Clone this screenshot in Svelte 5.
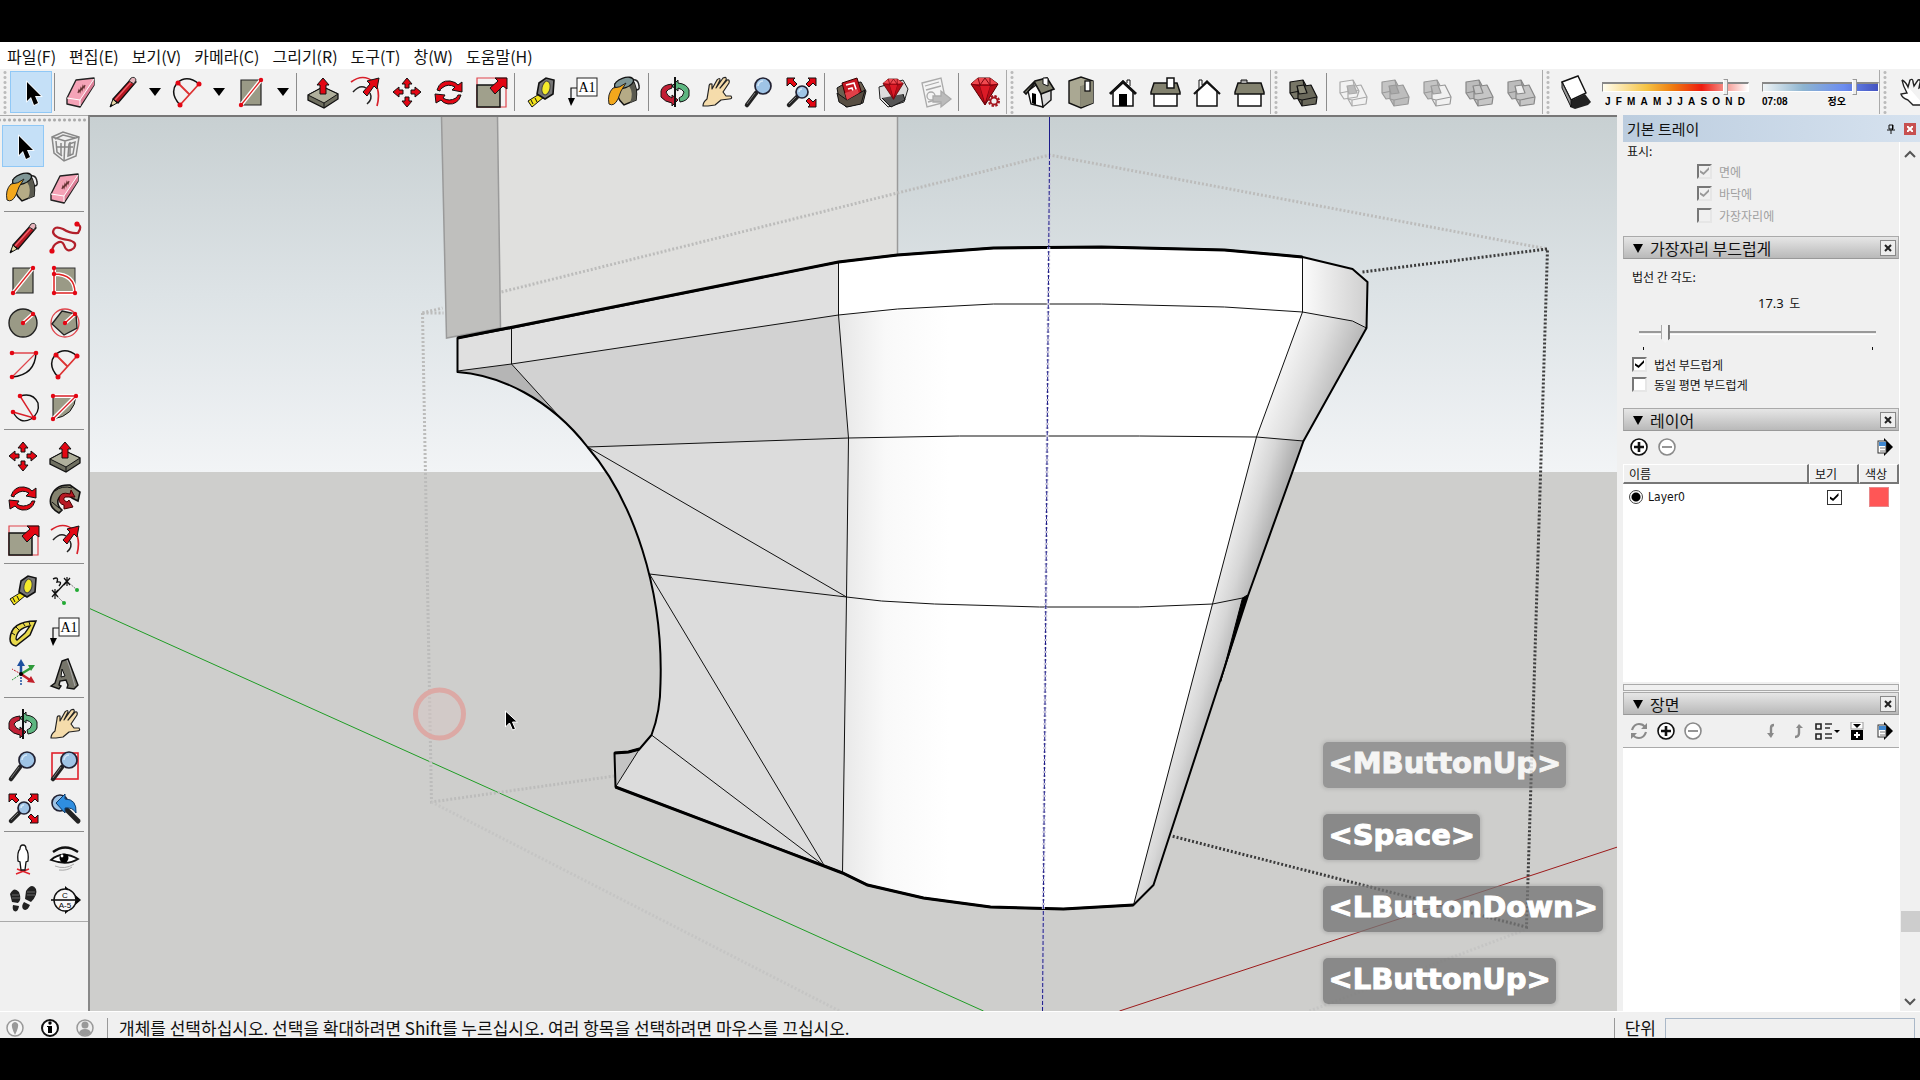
<script lang="ts">
	const uid = $props.id();

	const menus = ['파일(F)', '편집(E)', '보기(V)', '카메라(C)', '그리기(R)', '도구(T)', '창(W)', '도움말(H)'];
	const months = 'JFMAMJJASOND'.split('');
	const keys = [
		{ label: '<MButtonUp>', faded: true },
		{ label: '<Space>', faded: false },
		{ label: '<LButtonDown>', faded: false },
		{ label: '<LButtonUp>', faded: false }
	];

	// "name+" means the button has a drop-down caret next to it
	const mainBar = [
		['select'],
		['eraser', 'pencil+', 'arc+', 'rect+'],
		['pushpull', 'offset', 'move', 'rotate', 'scale'],
		['tape', 'label', 'paint'],
		['orbit', 'pan', 'zoom', 'extents'],
		['warehouse', 'extwarehouse', 'layout'],
		['ruby']
	];
	const viewBar = ['iso', 'top', 'front', 'right', 'back', 'left'];
	const solidBar = ['intersect', 'union', 'subtract', 'trim', 'split'];
	const sideBar = [
		['select', 'component', 'paint', 'eraser'],
		['pencil', 'freehand', 'rect', 'rotrect', 'circle', 'polygon', 'arc3', 'arc', 'arccenter', 'pie'],
		['move', 'pushpull', 'rotate', 'followme', 'scale', 'offset'],
		['tape', 'dimension', 'protractor', 'label', 'axes', 'text3d'],
		['orbit', 'pan', 'zoom', 'zoomwin', 'extents', 'previous'],
		['person', 'eye', 'walk', 'section']
	];

	const lens = (x: number, y: number, r: number) =>
		`<path d="M${x - r + 1} ${y + r - 1}L6 31" stroke="#222" stroke-width="4.5" stroke-linecap="round"/><path d="M${x - r} ${y + r - 1}L6 30" stroke="#777" stroke-width="1"/><circle cx="${x}" cy="${y}" r="${r}" fill="#9fc4e6" stroke="#223" stroke-width="1.7"/><path d="M${x - r + 3} ${y}a${r - 3} ${r - 3} 0 0 1 ${r - 3} ${3 - r}" fill="none" stroke="#d5e8f8" stroke-width="1.5"/>`;
	const red = 'fill="#e30613" stroke="#111" stroke-width="1" stroke-linejoin="round"';
	const dots = (list: number[][], r = 2.2) =>
		list.map(([x, y]) => `<circle cx="${x}" cy="${y}" r="${r}" fill="#e30613"/>`).join('');
	const slant = '<path d="M16 18L23 10L20 7L32 4L30 15L27 12L20 22Z" ' + red + '/>';
	const rubyGem =
		'<path d="M4 10L11 4H23L31 10L18 31Z" fill="#b80d18" stroke="#500" /><path d="M4 10H31L23 4H11Z" fill="#ef4a50"/><path d="M11 4L13 11L18 31L23 11V4M13 11L18 4L23 11M4 10L13 12L23 12L31 10" fill="none" stroke="#7c0610" stroke-width="1"/><path d="M13 12H23L18 28Z" fill="#dc1a26"/>';
	const boxes = (a: string, b: string, s: string, mid = 'none') =>
		`<g stroke="${s}" stroke-width="1.2" stroke-linejoin="round"><path d="M5 8L18 6L24 17L22 23L9 25L5 19Z" fill="${a}"/><path d="M5 19L20 16L24 17M20 16L18 6" fill="none"/><path d="M13 13L26 11L32 23L31 30L17 32L13 25Z" fill="${b}"/><path d="M17 26L32 23M13 25L17 26L17 32" fill="none"/><path d="M12 12L19 11L22 19L14 20Z" fill="${mid}"/></g>`;

	const icons: Record<string, string> = {
		select: '<path d="M14 8V27L18 23L21 31L25 29L22 22H28Z" fill="#000" stroke="#fff" stroke-width="1.5" paint-order="stroke"/>',
		eraser:
			'<path d="M4 24L13 6L31 4V11L17 33L4 30Z" fill="#f5a3b7" stroke="#222" stroke-width="1.4" stroke-linejoin="round"/><path d="M17 26L31 5V11L17 32Z" fill="#dc7f97"/><path d="M4 24L17 26L31 5M17 26V32" fill="none" stroke="#fff" stroke-width="1"/><path d="M15 19l1-3 1 2 1-4 1 2 1-4 1 2 1-3" fill="none" stroke="#633" stroke-width="1.2"/>',
		pencil:
			'<path d="M5 33L8 25L12 29Z" fill="#e6d9a8" stroke="#111"/><path d="M5 33L6 30L8 31Z"/><path d="M8 25L26 5L31 8L13 29Z" fill="#b51620" stroke="#111" stroke-width="1.3"/><path d="M10 26L27 7" stroke="#f0606a" stroke-width="1.4"/><path d="M24 7L26 4Q30 2 31 6L29 10Z" fill="#e7b5bd" stroke="#333"/>',
		arc:
			'<path d="M11 31Q0 19 8 9Q18 0 30 10" fill="none" stroke="#111" stroke-width="1.5"/><path d="M11 31L30 10M9 9L20 20" stroke="#d33" stroke-width="1.8"/>' +
			dots([[11, 31], [30, 10], [9, 9]], 2.5),
		rect:
			'<path d="M8 6H28V31H8Z" fill="#9a9a86" stroke="#222" stroke-width="1.2"/><path d="M8 31L28 6" stroke="#fff" stroke-width="4"/><path d="M8 31L28 6" stroke="#d22" stroke-width="1.3"/>' +
			dots([[8, 31], [28, 6]]),
		pushpull:
			'<path d="M3 21L18 13L33 20V25L19 34L3 26Z" fill="#6f6f60" stroke="#111" stroke-width="1.3"/><path d="M3 21L18 13L33 20L19 29Z" fill="#b0b09c" stroke="#111"/><path d="M19 29V34" stroke="#111"/><path d="M15 20V11H12L18 4L24 11H21V20Z" ' + red + '/>',
		offset:
			'<path d="M4 8Q16 -1 27 8Q34 17 30 32" fill="none" stroke="#d8202a" stroke-width="1.7"/><path d="M6 18Q13 10 19 14M23 19Q26 25 20 30" fill="none" stroke="#222" stroke-width="1.5"/>' + slant,
		move:
			'<path d="M18 4L23 10H20V14H16V10H13ZM18 33L13 27H16V23H20V27H23ZM4 18L10 13V16H14V20H10V23ZM32 18L26 23V20H22V16H26V13Z" ' + red + '/>',
		rotate:
			'<path d="M6 16Q9 6 19 7Q25 8 27 11L31 8V18L21 16L24 13Q17 9 11 14Q9 15 9 17Z" ' + red + '/><path d="M30 21Q27 31 17 30Q12 29 10 26L5 29L4 20L14 21L12 24Q18 28 25 24Q26 23 27 21Z" ' + red + '/>',
		scale:
			'<path d="M4 4H33V33H4Z" fill="none" stroke="#e0454c" stroke-width="1.2"/><path d="M4 11H27V33H4Z" fill="#a0a08c" stroke="#111" stroke-width="1.5"/><path d="M17 14L25 7L22 4H34V15L30 12L22 20Z" ' + red + '/>',
		tape:
			'<path d="M5 27L18 19L21 23L9 33Z" fill="#f2e21b" stroke="#111"/><path d="M8 26l2 4M12 24l2 4" stroke="#111"/><path d="M16 9L23 4L31 6L30 20L22 25L14 20Z" fill="#777" stroke="#111" stroke-width="1.6"/><ellipse cx="23" cy="14" rx="4" ry="7" transform="rotate(12 23 14)" fill="#f4ea2a" stroke="#444"/>',
		label:
			'<path d="M6 24V14H14" fill="none" stroke="#111" stroke-width="1.2"/><path d="M3 24H10L6 32Z"/><rect x="12" y="4" width="20" height="18" fill="#fff" stroke="#222"/><text x="22" y="18" font-size="14" text-anchor="middle" font-family="Liberation Serif">A1</text>',
		paint:
			'<path d="M20 8Q31 2 32 12Q33 16 29 16" fill="none" stroke="#222" stroke-width="1.5"/><path d="M8 10L25 5Q31 14 29 26L17 31Q8 23 8 10Z" fill="#b5ab86" stroke="#111" stroke-width="1.5"/><path d="M22 12Q27 19 23 29L29 26Q31 14 25 5Z" fill="#59594f"/><ellipse cx="17" cy="9" rx="10" ry="5" transform="rotate(-20 17 9)" fill="#7f9696" stroke="#111" stroke-width="1.3"/><path d="M6 14Q13 14 19 9Q13 17 11 25Q7 33 2 30Q0 20 6 14Z" fill="#f3a81c" stroke="#222"/>',
		orbit:
			'<path d="M15 10Q5 11 4 17V23Q8 28 15 29V32L21 26L15 21V24Q10 22 9 18Q11 15 15 14Z" fill="#c21f35" stroke="#111"/><path d="M21 9Q30 10 32 16V22Q30 27 23 28L22 24Q26 23 27 18Q25 15 21 14V17L15 12L21 6Z" fill="#5db680" stroke="#111"/><path d="M18 3V33" stroke="#111" stroke-width="2"/>',
		pan:
			'<path d="M4 32Q4 28 8 25L10 13Q10 9 13 10L13 15L18 6Q21 3 21 6L17 14L24 4Q28 2 27 6L21 14L28 6Q31 5 30 9L24 18L27 22H32Q34 25 30 25L22 26L16 31L9 32Z" fill="#f5dcab" stroke="#222" stroke-width="1.2" stroke-linejoin="round"/>',
		zoom: lens(22, 12, 8),
		extents:
			lens(19, 18, 6) +
			'<path d="M4 4H12L10 6L14 10L11 13L7 9L4 12ZM33 4H25L27 6L23 10L26 13L30 9L33 12ZM33 33H25L27 31L23 27L26 24L30 28L33 25Z" ' + red + '/>',
		warehouse:
			'<path d="M4 14L9 11L28 8L33 17L30 29L13 33L6 25Z" fill="#6b6152" stroke="#111"/><path d="M9 9L24 4L29 20L14 27Z" fill="#c81722" stroke="#300"/><path d="M13 11L21 9L24 18M15 15L19 14L21 20" fill="none" stroke="#fff" stroke-width="1.6"/><path d="M4 19L14 26L32 16L28 30L14 33L6 28Z" fill="#574e42" stroke="#111"/><path d="M14 26L26 19L24 15L12 19Z" fill="#e04048"/>',
		extwarehouse:
			'<path d="M4 13L28 6L33 15L29 28L13 33L5 25Z" fill="#ddd" stroke="#222"/><path d="M7 24L16 33L30 26L28 20" fill="#555" stroke="#111"/><g transform="translate(5 2) scale(.75)">' + rubyGem + '</g>',
		layout:
			'<g stroke="#aaa" stroke-width="1.3"><path d="M5 9L24 4L29 28L10 33Z" fill="#f4f4f4"/><path d="M8 12L22 8M9 16L24 12M11 28L26 24" fill="none"/><circle cx="14" cy="22" r="4" fill="none"/><path d="M16 22H24V17L34 25L24 33V28H16Z" fill="#bbb"/></g>',
		ruby:
			rubyGem + '<circle cx="27" cy="27" r="5" fill="#f0f0f0" stroke="#a3141d" stroke-width="2" stroke-dasharray="2.4 1.5"/><circle cx="27" cy="27" r="3.5" fill="none" stroke="#a3141d" stroke-width="1.8"/>',
		iso:
			'<path d="M7 17L15 11L22 19V33L10 30Z" fill="#fff" stroke="#111" stroke-width="1.4"/><path d="M20 20L30 14V26L22 33Z" fill="#ddd" stroke="#111" stroke-width="1.4"/><path d="M3 18L14 7L26 4L33 15L20 20L14 9L5 20Z" fill="#83826f" stroke="#111" stroke-width="1.6"/><path d="M22 4H27V12L22 10Z" fill="#fff" stroke="#111"/><path d="M11 19L15 20V31L11 29Z"/>',
		top:
			'<path d="M6 7L18 3L30 7V29L18 34L6 29Z" fill="#aaa893" stroke="#111" stroke-width="1.4"/><path d="M18 12V33" stroke="#5d5c4e"/><path d="M18 12L30 7V29L18 33Z" fill="#8c8b77"/><rect x="22" y="7" width="5" height="10" fill="#fff" stroke="#111" stroke-width="1.3"/>',
		front:
			'<path d="M8 17V32H28V17L18 7Z" fill="#fff" stroke="#111" stroke-width="1.5"/><path d="M5 20L18 8L31 20" fill="none" stroke="#111" stroke-width="3"/><rect x="14" y="20" width="8" height="12"/><path d="M25 12V6H22V9" fill="#fff" stroke="#111"/>',
		right:
			'<rect x="7" y="18" width="23" height="14" fill="#fff" stroke="#111" stroke-width="1.5"/><path d="M7 9H30L33 18V20H4V18Z" fill="#83826f" stroke="#111" stroke-width="1.5"/><rect x="20" y="4" width="7" height="10" fill="#fff" stroke="#111" stroke-width="1.5"/>',
		back:
			'<path d="M8 17V32H28V17L18 7Z" fill="#fff" stroke="#111" stroke-width="1.5"/><path d="M5 20L18 8L31 20" fill="none" stroke="#111" stroke-width="2.2"/><path d="M10 14V6H13V11" fill="#fff" stroke="#111"/>',
		left:
			'<rect x="7" y="18" width="23" height="14" fill="#fff" stroke="#111" stroke-width="1.5"/><path d="M7 9H30L33 18V20H4V18Z" fill="#83826f" stroke="#111" stroke-width="1.5"/><path d="M10 9V6H16V9" fill="#aaa" stroke="#111"/>',
		outer: boxes('#777667', '#6a695b', '#111', '#8b8a78'),
		intersect: boxes('none', 'none', '#aaa', '#bbb'),
		union: boxes('#c4c4c4', '#bdbdbd', '#999', '#aaa'),
		subtract: boxes('#c4c4c4', '#f1f1f1', '#999', '#bbb'),
		trim: boxes('#bcbcbc', '#c6c6c6', '#888', '#c6c6c6'),
		split: boxes('#bcbcbc', '#c6c6c6', '#888', '#eee'),
		shadow:
			'<path d="M13 27L28 20L34 28L31 31L18 35L13 33Z" fill="#222"/><path d="M5 8L21 2L29 19L14 26Z" fill="#fff" stroke="#111" stroke-width="1.4"/><path d="M5 8L14 26V33L5 14Z" fill="#999" stroke="#111"/>',
		component:
			'<g fill="none" stroke="#888" stroke-width="1.5"><path d="M5 9L16 4L32 9L29 28L17 33L7 25Z" fill="#eee"/><path d="M5 9L18 13L32 9M18 13L17 33M9 13L10 24L15 28M22 16L28 14L26 26L21 28Z"/><path d="M8 11L16 7L28 10M10 19L26 19M14 15v12M23 14v14"/></g>',
		freehand:
			'<path d="M5 31Q6 25 10 23Q15 20 17 25Q20 34 27 28Q31 22 21 20Q7 18 6 12Q7 5 16 9Q24 14 31 13Q36 6 30 4" fill="none" stroke="#b21f2a" stroke-width="2.2"/>' +
			dots([[5, 31], [30, 4]], 2.6),
		rotrect:
			'<rect x="8" y="6" width="20" height="25" fill="#9a9a86" stroke="#333"/><path d="M7 12Q28 12 28 31M7 6V31H28" fill="none" stroke="#fff" stroke-width="4"/><path d="M7 12Q28 12 28 31M7 6V31H28" fill="none" stroke="#d22" stroke-width="1.5"/>' +
			dots([[7, 6], [7, 12], [7, 31], [28, 31]]),
		circle:
			'<circle cx="18" cy="19" r="14" fill="#9a9a86" stroke="#222" stroke-width="1.4"/><path d="M18 19L28 10" stroke="#fff" stroke-width="4"/><path d="M18 19L28 10" stroke="#d22" stroke-width="1.5"/>' +
			dots([[18, 19], [28, 10]]),
		polygon:
			'<circle cx="18" cy="19" r="14" fill="none" stroke="#e0454c" stroke-width="1.3"/><path d="M15 7L29 10L30 24L17 31L5 20Z" fill="#9a9a86" stroke="#222" stroke-width="1.4"/><path d="M18 19L28 10" stroke="#fff" stroke-width="4"/><path d="M18 19L28 10" stroke="#d22" stroke-width="1.5"/>' +
			dots([[18, 19], [28, 10]]),
		arc3:
			'<path d="M31 7Q30 29 7 31" fill="none" stroke="#111" stroke-width="1.5"/><path d="M7 7H31L7 31" fill="none" stroke="#e0454c" stroke-width="1.3"/>' +
			dots([[7, 7], [31, 7], [7, 31]], 2.3),
		arccenter:
			'<path d="M15 8Q28 4 33 15Q35 25 26 31Q15 37 8 24" fill="none" stroke="#111" stroke-width="1.4"/><path d="M15 8L29 30L8 24" fill="none" stroke="#d8202a" stroke-width="1.4"/>' +
			dots([[15, 8], [29, 30], [8, 24]], 2.3),
		pie:
			'<path d="M6 7H29Q28 28 6 31Z" fill="#9a9a86" stroke="#111"/><path d="M6 8H29L6 31" fill="none" stroke="#fff" stroke-width="4"/><path d="M6 8H29L6 31" fill="none" stroke="#d8202a" stroke-width="1.4"/>' +
			dots([[6, 8], [29, 8], [6, 31]]),
		followme:
			'<path d="M12 33Q1 27 4 17Q8 4 23 5L33 12L31 21L25 18Q15 10 11 20Q10 26 15 30Z" fill="#85836f" stroke="#111" stroke-width="1.6"/><path d="M23 14Q13 11 12 19Q12 24 17 25L17 29L26 27L22 20L20 22Q15 20 18 17H28L24 10Z" fill="#b81924" stroke="#400"/><path d="M5 22L12 28M8 11Q15 5 25 8" fill="none" stroke="#111"/>',
		dimension:
			'<path d="M8 22L20 9" stroke="#111" stroke-width="1.3"/><path d="M20 9L30 18M8 22L17 31" stroke="#777" stroke-dasharray="2 1"/><path d="M17 6l6 7M17 13l6-7M5 18l6 7M5 25l6-7M20 5v9M8 17v10" stroke="#111" stroke-width="1.2"/><path d="M6 7Q12 4 10 10Q16 9 12 14" fill="none" stroke="#111" stroke-width="1.4"/><circle cx="30" cy="18" r="2" fill="#2a3"/><circle cx="17" cy="31" r="2" fill="#2a3"/>',
		protractor:
			'<path d="M5 25Q6 7 31 7L25 21L11 32Q5 31 5 25Z" fill="#e8d94c" stroke="#111" stroke-width="1.5"/><path d="M11 25Q12 14 25 12L20 19L12 26Z" fill="#f3f3f3" stroke="#111" stroke-width="1.3"/><path d="M7 19l3 2M11 13l3 3M18 9l2 3M24 8l1 3" stroke="#111"/>',
		axes:
			'<path d="M16 18V8" stroke="#1d4fa0" stroke-width="2.5"/><path d="M12 10L16 3L20 10Z" fill="#1d4fa0"/><path d="M16 18L26 12" stroke="#2f9a3b" stroke-width="2.5"/><path d="M23 9L30 9L26 15Z" fill="#2f9a3b"/><path d="M16 18L25 24" stroke="#c21f2a" stroke-width="2.5"/><path d="M26 20L30 27L22 26Z" fill="#c21f2a"/><path d="M16 18L7 13" stroke="#c21f2a" stroke-dasharray="2 1"/><path d="M16 18L7 24" stroke="#2f9a3b" stroke-dasharray="2 1"/><path d="M16 18V29" stroke="#1d4fa0" stroke-width="1.5" stroke-dasharray="2 1"/><circle cx="16" cy="18" r="2"/>',
		text3d:
			'<path d="M15 5L21 3L31 29L27 33L20 32L21 29L19 24L13 25L12 29L14 30L12 33L4 30L8 27Z" fill="#76756a" stroke="#111" stroke-width="1.4"/><path d="M15 13L18 20L14 21Z" fill="#f0f0f0" stroke="#111"/><path d="M20 4L23 12L28 30" fill="none" stroke="#aaa" stroke-width="1"/>',
		zoomwin: '<rect x="5" y="5" width="26" height="26" fill="none" stroke="#e0222c" stroke-width="1.6"/>' + lens(22, 12, 8),
		previous:
			'<circle cx="13" cy="13" r="8" fill="#9fc4e6" stroke="#223" stroke-width="1.6"/><path d="M20 20L31 31" stroke="#222" stroke-width="5" stroke-linecap="round"/><path d="M9 13L18 4V9Q30 9 29 23Q26 17 18 18V23Z" fill="#2f8ee0" stroke="#0c3b6b"/>',
		person:
			'<path d="M12 29L25 34M24 29L11 34" stroke="#e0222c" stroke-width="1.4"/><path d="M18 5Q21 5 21 9Q24 12 23 21L21 22L20 30H16L15 22L13 21Q12 12 15 9Q15 5 18 5Z" fill="#fff" stroke="#111" stroke-width="1.3"/>',
		eye:
			'<path d="M6 12Q18 3 31 12" fill="none" stroke="#111" stroke-width="2.4"/><path d="M4 20Q15 10 31 19Q20 26 4 20Z" fill="#fff" stroke="#111" stroke-width="1.8"/><circle cx="17" cy="18" r="4.5"/><circle cx="15" cy="16" r="1.4" fill="#fff"/><path d="M8 26Q18 30 27 24M12 30Q20 31 25 27" fill="none" stroke="#aaa"/>',
		walk:
			'<path d="M5 12Q9 4 14 10Q17 18 13 21L7 20ZM8 23L14 24Q13 31 9 29Q7 27 8 23ZM21 9Q27 0 31 7Q33 13 26 20L20 17ZM19 20L25 23Q22 30 18 27Q16 24 19 20Z" fill="#222"/><path d="M7 13h7M7 16h8M22 10h8M22 13h8" stroke="#666"/>',
		section:
			'<path d="M18 4L34 18L18 32Z"/><circle cx="18" cy="18" r="11" fill="#f8f8f8" stroke="#111" stroke-width="1.4"/><path d="M4 18H33" stroke="#111" stroke-width="1.6"/><text x="18" y="16" font-size="8" text-anchor="middle" font-family="Liberation Sans">C</text><text x="18" y="26" font-size="8" text-anchor="middle" font-family="Liberation Sans">A-5</text>',
		hand:
			'<path d="M8 6Q12 8 14 13L16 6Q19 4 19 8L20 12L24 6Q27 5 26 9L25 14L31 11M8 6Q9 12 13 19L7 20Q8 24 14 26L19 31H30" fill="#fff" stroke="#222" stroke-width="1.4"/>'
	};
</script>

{#snippet tool(name: string, active = false)}
	<button class="tool" class:active aria-label={name}>
		<svg viewBox="0 0 36 36">{@html icons[name]}</svg>
	</button>
{/snippet}

{#snippet panelHead(title: string)}
	<div class="panel-head">
		<svg width="10" height="10"><path d="M0 1H10L5 10Z" /></svg>
		<h2>{title}</h2>
		<button class="close" aria-label="close {title}">
			<svg width="8" height="8"><path d="M1 1L7 7M7 1L1 7" stroke="#222" stroke-width="2" /></svg>
		</button>
	</div>
{/snippet}

{#snippet round(sign: string, muted = false)}
	<button class="mini" class:muted aria-label={sign}>
		<svg viewBox="0 0 18 18">
			<circle cx="9" cy="9" r="8" fill="#fff" stroke="currentColor" stroke-width="1.6" />
			<path d={sign === 'add' ? 'M4 9H14M9 4V14' : 'M4 9H14'} stroke="currentColor" stroke-width={muted ? 1.8 : 2.6} />
		</svg>
	</button>
{/snippet}

{#snippet details()}
	<button class="mini" aria-label="details">
		<svg viewBox="0 0 18 18">
			<path d="M8 0L17 9L8 18Z" />
			<rect x="2" y="3" width="8" height="12" fill="#fff" stroke="#333" />
			<rect x="3" y="4" width="7" height="4" fill="#3f87cf" />
			<path d="M4 10H9M4 13H9" stroke="#777" />
		</svg>
	</button>
{/snippet}

<div class="shell">
	<header>
		<nav>
			{#each menus as menu}
				<button>{menu}</button>
			{/each}
		</nav>
		<div class="toolbar">
			<i class="grip"></i>
			{#each mainBar as group, g}
				{#if g > 0}<i class="sep"></i>{/if}
				{#each group as name}
					{@render tool(name.replace('+', ''), name === 'select')}
					{#if name.endsWith('+')}
						<button class="caret" aria-label="more">
							<svg width="12" height="8"><path d="M0 0H12L6 8Z" /></svg>
						</button>
					{/if}
				{/each}
			{/each}
			<i class="edge"></i>
			{#each viewBar as name}{@render tool(name)}{/each}
			<i class="edge"></i>
			{@render tool('outer')}
			<i class="sep"></i>
			{#each solidBar as name}{@render tool(name)}{/each}
			<i class="edge"></i>
			{@render tool('shadow')}
			<div class="shade date">
				<input type="range" min="0" max="100" value="86" aria-label="date" />
				<div class="scale-row">
					{#each months as month}<span>{month}</span>{/each}
				</div>
			</div>
			<div class="shade time">
				<input type="range" min="0" max="100" value="81" aria-label="time" />
				<div class="scale-row"><span>07:08</span><span>정오</span></div>
			</div>
			<i class="edge"></i>
			{@render tool('hand')}
		</div>
	</header>

	<main>
		<aside class="side">
			<i class="side-grip"></i>
			{#each sideBar as group}
				<div class="tools">
					{#each group as name}{@render tool(name, name === 'select')}{/each}
				</div>
			{/each}
		</aside>

		<section class="viewport">
			<svg viewBox="90 117 1528 894" preserveAspectRatio="xMidYMid slice">
				<defs>
					<linearGradient id="{uid}-sky" x1="0" y1="0" x2="0" y2="1">
						<stop offset="0" stop-color="#c8d0d2" />
						<stop offset="0.5" stop-color="#dde3e6" />
						<stop offset="1" stop-color="#f2f4f6" />
					</linearGradient>
					<linearGradient id="{uid}-front" gradientUnits="userSpaceOnUse" x1="843" y1="0" x2="950" y2="0">
						<stop offset="0" stop-color="#e8e8e8" />
						<stop offset="0.4" stop-color="#f9f9f9" />
						<stop offset="1" stop-color="#fff" />
					</linearGradient>
					<linearGradient id="{uid}-flank" gradientUnits="userSpaceOnUse" x1="1205" y1="610" x2="1246" y2="622">
						<stop offset="0" stop-color="#efefef" />
						<stop offset="0.5" stop-color="#d6d6d6" />
						<stop offset="1" stop-color="#b0b0b0" />
					</linearGradient>
					<linearGradient id="{uid}-shoulder" gradientUnits="userSpaceOnUse" x1="1276" y1="375" x2="1336" y2="398">
						<stop offset="0" stop-color="#f6f6f6" />
						<stop offset="0.5" stop-color="#dedede" />
						<stop offset="1" stop-color="#bababa" />
					</linearGradient>
					<linearGradient id="{uid}-rim" x1="0" y1="0" x2="1" y2="0">
						<stop offset="0" stop-color="#fbfbfb" />
						<stop offset="1" stop-color="#cfcfcf" />
					</linearGradient>
				</defs>

				<rect x="90" y="117" width="1528" height="356" fill="url(#{uid}-sky)" />
				<rect x="90" y="472" width="1528" height="540" fill="#cececc" />

				<!-- axes on the ground -->
				<path d="M89 608L984 1011" stroke="#1f9d24" fill="none" />
				<path d="M1120 1011L1618 847" stroke="#9c1a1a" fill="none" />

				<!-- wall panel behind the bowl -->
				<path d="M498 117H898V300L500 345Z" fill="#e0e0de" />
				<path d="M442 117H498L501 328L447 338Z" fill="#bfbfbd" />
				<path d="M442 117L447 338L501 328L498 117M898 117V255" stroke="#9a9a9a" stroke-width="1.5" fill="none" />

				<!-- hidden selection box edges -->
				<g class="dots" stroke="#bcbcbb">
					<path d="M423 313L443 308M502 292L1050 155L1548 249" />
					<path d="M423 313H444M423 313L432 802L615 776" />
					<path d="M432 802L840 1011M1525 930L1310 1011" stroke="#c5c5c4" />
				</g>

				<!-- bowl faces -->
				<path
					d="M458 338L512 328L839 262L849 438L847 597L843 873L825 866L616 787L615 753L629 752L640 749L652 735C657 722 661 705 661 683C664 590 634 500 588 447C550 398 500 375 458 372Z"
					fill="#dcdcdc"
				/>
				<path d="M458 338L512 328L839 262V315L512 364L458 371Z" fill="#e0e0e0" />
				<path d="M512 364L839 315L849 438L588 447L563 420Z" fill="#d2d2d2" />
				<path d="M458 371L512 364L563 420L535 399L512 386L489 377L474 373Z" fill="#b5b5b5" />
				<path d="M615 753L629 752L640 749L616 787Z" fill="#c4c4c4" />
				<path
					d="M839 262L898 255L994 248L1102 247L1225 250L1303 257V312L1257 437L1213 604L1134 905L1064 909L991 907L924 898L868 885L843 873L847 597L849 438L839 315Z"
					fill="url(#{uid}-front)"
				/>
				<path d="M839 262L898 255L994 248L1102 247L1225 250L1303 257V312L1102 304L994 304L839 315Z" fill="#fff" />
				<path d="M1303 312L1353 321L1367 328L1304 441L1257 437Z" fill="url(#{uid}-shoulder)" />
				<path d="M1257 437L1304 441L1248 597L1154 885L1134 905L1213 604Z" fill="url(#{uid}-flank)" />
				<path d="M1303 257L1353 269L1368 282L1367 328L1353 321L1303 312Z" fill="url(#{uid}-rim)" />

				<!-- thin edges -->
				<g fill="none" stroke="#111" stroke-width="1">
					<path d="M458 371L512 364L839 315L898 309L994 304L1102 304L1225 307L1303 312L1353 321L1367 328" />
					<path d="M512 328V364L563 420" />
					<path d="M839 262V315L849 438L847 597L843 873" />
					<path d="M588 447L849 438L960 436L1140 436L1257 437L1304 441" />
					<path d="M650 574L847 597L882 601L935 604L1040 607H1140L1213 604L1248 597" />
					<path d="M1303 257V312L1257 437L1213 604L1134 905" />
					<path d="M588 447L847 597M650 574L825 866L652 735M640 749L616 787" />
				</g>
				<!-- profile -->
				<path
					d="M458 338L512 328L839 262L898 255L994 248L1102 247L1225 250L1303 257L1353 269L1368 282L1367 328L1304 441L1248 597L1154 885L1134 905L1064 909L991 907L924 898L868 885L843 873L825 866L616 787L615 753L629 752L640 749L652 735C657 722 661 705 661 683C664 590 634 500 588 447C550 398 500 375 458 372Z"
					fill="none"
					stroke="#000"
					stroke-width="2"
					stroke-linejoin="round"
				/>
				<path
					d="M458 338L839 262L898 255L994 248L1102 247L1225 250L1303 257M616 787L843 873L868 885L924 898L991 907L1064 909L1134 905M615 753L629 752L640 749"
					fill="none"
					stroke="#000"
					stroke-width="3"
				/>
				<path d="M1248 595L1243 598L1221 682Z" stroke="#000" />

				<!-- near selection box edges -->
				<path class="dots" d="M1363 272L1548 249L1527 927L1172 836" stroke="#3c3c3c" />
				<path d="M1050 117V155" stroke="#1b1b8a" />
				<path d="M1050 155L1043 1011" stroke="#c9c5da" stroke-width="3" stroke-dasharray="2 2" />
				<path d="M1050 155L1043 1011" stroke="#1b1b8a" stroke-dasharray="4 2" />

				<circle cx="440" cy="714" r="24" fill="#d6c6c4" fill-opacity="0.5" stroke="#dca9a5" stroke-width="5" />
				<path d="M506 711V727L510 723L513 730L516 729L513 722H518Z" stroke="#fff" stroke-width="1" />
			</svg>
			<ul class="keys">
				{#each keys as key}
					<li class:faded={key.faded}>{key.label}</li>
				{/each}
			</ul>
		</section>

		<aside class="tray">
			<div class="tray-title">
				<h1>기본 트레이</h1>
				<button class="pin" aria-label="pin">
					<svg width="8" height="10">
						<path d="M2 1H6V5H2ZM0 6H8M4 6V10" fill="none" stroke="#111" />
						<path d="M5 1h1v5h-1z" />
					</svg>
				</button>
				<button class="shut" aria-label="close tray">
					<svg width="6" height="6"><path d="M0 0L6 6M6 0L0 6" stroke="#fff" stroke-width="2" /></svg>
				</button>
			</div>
			<div class="tray-body">
				<div class="panels">
					<div class="display">
						<p>표시:</p>
						<label><input type="checkbox" checked disabled />면에</label>
						<label><input type="checkbox" checked disabled />바닥에</label>
						<label><input type="checkbox" disabled />가장자리에</label>
					</div>

					{@render panelHead('가장자리 부드럽게')}
					<div class="soften">
						<label for="{uid}-angle">법선 간 각도:</label>
						<output>17.3 <small>도</small></output>
						<input id="{uid}-angle" type="range" min="0" max="180" step="0.1" value="17.3" />
						<div class="ticks"><i></i><i></i></div>
						<label><input type="checkbox" checked />법선 부드럽게</label>
						<label><input type="checkbox" />동일 평면 부드럽게</label>
					</div>

					{@render panelHead('레이어')}
					<div class="bar">
						{@render round('add')}
						{@render round('remove', true)}
						<span class="push"></span>
						{@render details()}
					</div>
					<div class="layers">
						<table>
							<thead>
								<tr><th>이름</th><th class="show">보기</th><th class="color">색상</th></tr>
							</thead>
							<tbody>
								<tr>
									<td><label><input type="radio" name="layer" checked />Layer0</label></td>
									<td class="mid"><input class="flat" type="checkbox" checked aria-label="보기" /></td>
									<td class="mid"><i class="swatch"></i></td>
								</tr>
							</tbody>
						</table>
					</div>
					<i class="splitter"></i>

					{@render panelHead('장면')}
					<div class="bar scenes">
						<button class="mini muted" aria-label="refresh">
							<svg viewBox="0 0 18 18">
								<path d="M2 8Q4 2 9 2Q13 2 15 5M16 10Q14 16 9 16Q5 16 3 13" fill="none" stroke="currentColor" stroke-width="2.2" />
								<path d="M17 1V7H11ZM1 17V11H7Z" fill="currentColor" />
							</svg>
						</button>
						{@render round('add')}
						{@render round('remove', true)}
						<span class="push"></span>
						<button class="mini muted" aria-label="move down">
							<svg viewBox="0 0 18 18">
								<path d="M14 3Q11 3 11 6V13" fill="none" stroke="currentColor" stroke-width="2.4" />
								<path d="M7 11H14L11 16Z" fill="currentColor" />
							</svg>
						</button>
						<button class="mini muted" aria-label="move up">
							<svg viewBox="0 0 18 18">
								<path d="M8 15Q12 15 12 11V5" fill="none" stroke="currentColor" stroke-width="2.4" />
								<path d="M9 6H16L12 2Z" fill="currentColor" />
							</svg>
						</button>
						<button class="mini wide" aria-label="view">
							<svg viewBox="0 0 26 18">
								<path d="M2 2H7V7H2ZM2 12H7V17H2Z" fill="none" stroke="#222" stroke-width="1.6" />
								<path d="M11 2H18M11 6H16M11 12H18M11 16H18" stroke="#333" stroke-width="1.6" />
								<path d="M20 8H26L23 11Z" />
							</svg>
						</button>
						<button class="mini" aria-label="scene details">
							<svg viewBox="0 0 18 18">
								<rect x="2" y="0" width="12" height="7" fill="#fff" stroke="#999" />
								<path d="M4 2H12L8 6Z" />
								<rect x="2" y="8" width="12" height="10" />
								<path d="M5 13H11M8 10V16" stroke="#fff" stroke-width="2" />
							</svg>
						</button>
						{@render details()}
					</div>
					<div class="list"></div>
				</div>
				<div class="scroll">
					<svg width="12" height="8"><path d="M1 7L6 2L11 7" fill="none" stroke="#555" stroke-width="2" /></svg>
					<i></i>
					<svg width="12" height="8"><path d="M1 1L6 6L11 1" fill="none" stroke="#555" stroke-width="2" /></svg>
				</div>
			</div>
		</aside>
	</main>

	<footer>
		<svg viewBox="0 0 20 20">
			<circle cx="10" cy="10" r="8" fill="#f6f6f6" stroke="#999" stroke-width="1.5" />
			<path d="M10 17Q6 9 7 6Q10 2 13 6Q14 9 10 17Z" fill="#999" />
		</svg>
		<svg viewBox="0 0 20 20">
			<circle cx="10" cy="10" r="8" fill="#fff" stroke="#111" stroke-width="2" />
			<circle cx="10" cy="5" r="1.7" />
			<path d="M7 8H12V15H8V9H7Z" />
		</svg>
		<svg viewBox="0 0 20 20">
			<circle cx="10" cy="10" r="8" fill="#eee" stroke="#999" stroke-width="1.5" />
			<circle cx="10" cy="7" r="3.5" fill="#999" />
			<path d="M4 15Q5 11 10 11Q15 11 16 15Q10 20 4 15Z" fill="#999" />
		</svg>
		<p>개체를 선택하십시오. 선택을 확대하려면 Shift를 누르십시오. 여러 항목을 선택하려면 마우스를 끄십시오.</p>
		<label for="{uid}-unit">단위</label>
		<input id="{uid}-unit" type="text" />
	</footer>
</div>

<style>
	:global(body) {
		margin: 0;
	}

	.shell {
		display: flex;
		flex-direction: column;
		box-sizing: border-box;
		height: 100vh;
		padding: 42px 0;
		overflow: hidden;
		background: #000;
		color: #111;
		font-family: "Noto Sans CJK KR", sans-serif;
		font-size: 12px;
	}

	.shell :global(*) {
		box-sizing: border-box;
	}

	button {
		padding: 0;
		border: 0;
		background: none;
		color: inherit;
		font: inherit;
	}

	svg {
		display: block;
	}

	h1,
	h2,
	p,
	ul {
		margin: 0;
		padding: 0;
		font-weight: 400;
	}

	input {
		margin: 0;
	}

	header {
		flex: none;
		background: #f2f2f2;
	}

	nav {
		display: flex;
		gap: 13px;
		height: 27px;
		padding: 0 7px;
		background: #fff;
		font-size: 16px;
		line-height: 28px;
	}

	.toolbar {
		display: flex;
		align-items: center;
		height: 46px;
		overflow: hidden;
	}

	.tool {
		display: flex;
		flex: none;
		align-items: center;
		justify-content: center;
		width: 42px;
		height: 42px;
	}

	.tool svg {
		flex: none;
		width: 36px;
		height: 36px;
	}

	.tool.active {
		border: 1px solid #90c8f6;
		background: #c5e0f7;
	}

	.grip,
	.edge {
		flex: none;
		height: 44px;
	}

	.grip {
		width: 10px;
		background: radial-gradient(circle, #bbb 1px, transparent 2px) 3px 0 / 4px 5px repeat-y;
	}

	.edge {
		width: 12px;
		border-left: 1px solid #aaa;
		background: radial-gradient(circle, #bbb 1px, transparent 2px) 3px 0 / 4px 5px repeat-y;
	}

	.sep {
		flex: none;
		width: 8px;
		height: 38px;
		background: linear-gradient(#8c8c8c, #8c8c8c) 2px 0 / 1px 100% no-repeat;
	}

	.caret {
		display: flex;
		flex: none;
		justify-content: center;
		width: 22px;
	}

	.shade {
		flex: none;
		padding-top: 2px;
	}

	.date {
		width: 147px;
		margin: 0 13px 0 6px;
	}

	.time {
		width: 117px;
	}

	.shade input {
		display: block;
		width: 100%;
		height: 18px;
		appearance: none;
		background: none;
	}

	.shade input::-webkit-slider-runnable-track {
		height: 10px;
		border: 1px solid #fff;
		border-top: 2px solid #888;
		border-left: 1px solid #888;
	}

	.date input::-webkit-slider-runnable-track {
		background: linear-gradient(90deg, #fffdf0, #f5c344 30%, #ef7c10 48%, #ee1c10 68%, #f6a09a 86%, #fff 100%);
	}

	.time input::-webkit-slider-runnable-track {
		background: linear-gradient(90deg, #eef3f5, #8db4d0 35%, #6c8df0 70%, #4453c0);
	}

	.shade input::-webkit-slider-thumb {
		width: 5px;
		height: 16px;
		margin-top: -5px;
		appearance: none;
		border: 1px solid #999;
		border-left-color: #fff;
		background: #eee;
	}

	.scale-row {
		display: flex;
		justify-content: space-between;
		padding: 0 4px 0 3px;
		color: #000;
		font-family: "Liberation Sans", "Noto Sans CJK KR", sans-serif;
		font-size: 10px;
		font-weight: 700;
		line-height: 12px;
	}

	.time .scale-row {
		justify-content: flex-start;
		gap: 40px;
		padding: 0;
	}

	main {
		display: flex;
		flex: 1;
		min-height: 0;
		background: #f0f0f0;
	}

	.side {
		display: flex;
		flex: none;
		flex-direction: column;
		width: 88px;
		border-top: 1px solid #aaa;
	}

	.side-grip {
		height: 9px;
		background: radial-gradient(circle, #aaa 1px, transparent 2px) 2px 2px / 5px 4px repeat-x;
	}

	.tools {
		display: grid;
		grid-template-columns: 42px 42px;
		padding: 0 2px;
	}

	.tools + .tools {
		padding-top: 8px;
		background: linear-gradient(#8c8c8c, #8c8c8c) 4px 2px / 80px 1px no-repeat;
	}

	.tools:last-child {
		border-bottom: 1px solid #aaa;
	}

	.viewport {
		position: relative;
		flex: 1;
		min-width: 0;
		border-top: 2px solid #777;
		border-left: 2px solid #888;
		background: #cececc;
	}

	.viewport > svg {
		width: 100%;
		height: 100%;
	}

	.dots {
		fill: none;
		stroke-width: 3;
		stroke-dasharray: 2 2;
	}

	.keys {
		position: absolute;
		right: 14px;
		bottom: 7px;
		display: flex;
		flex-direction: column;
		gap: 26px;
		align-items: flex-start;
		list-style: none;
	}

	.keys li {
		height: 46px;
		padding: 0 5px;
		border-radius: 5px;
		background: rgba(118, 118, 118, 0.78);
		box-shadow: 0 0 3px 2px rgba(150, 150, 150, 0.35);
		color: #fff;
		font-family: "DejaVu Sans", sans-serif;
		font-size: 29px;
		font-weight: 700;
		line-height: 42px;
		-webkit-text-stroke: 1px #fff;
	}

	.keys .faded {
		opacity: 0.8;
	}

	.tray {
		display: flex;
		flex: none;
		flex-direction: column;
		width: 303px;
		padding-left: 6px;
	}

	.tray-title {
		display: flex;
		align-items: center;
		height: 27px;
		padding: 0 4px;
		background: linear-gradient(90deg, #bccddf, #d6e2ef);
	}

	.tray-title h1 {
		flex: 1;
		font-size: 15px;
		line-height: 26px;
	}

	.pin {
		margin-right: 9px;
	}

	.shut {
		display: grid;
		place-items: center;
		width: 12px;
		height: 12px;
		background: #c75050;
	}

	.tray-body {
		display: flex;
		flex: 1;
		min-height: 0;
	}

	.panels {
		display: flex;
		flex: 1;
		flex-direction: column;
		border-right: 1px solid #fff;
	}

	.display {
		flex: none;
		height: 94px;
		padding-left: 4px;
	}

	.display p {
		height: 18px;
		line-height: 17px;
	}

	.display label {
		display: flex;
		gap: 7px;
		align-items: center;
		height: 22px;
		padding-left: 70px;
		color: #a0a0a0;
	}

	input[type="checkbox"] {
		display: grid;
		place-items: center;
		flex: none;
		width: 15px;
		height: 15px;
		appearance: none;
		border: 2px solid;
		border-color: #777 #e6e6e6 #e6e6e6 #777;
		background: #fff;
		color: #000;
	}

	input[type="checkbox"]:disabled {
		background: #f0f0f0;
		color: #999;
	}

	input[type="checkbox"]:checked::after {
		width: 9px;
		height: 8px;
		background: currentColor;
		clip-path: polygon(0 40%, 40% 70%, 100% 0, 100% 35%, 40% 100%, 0 70%);
		content: "";
	}

	input[type="checkbox"].flat {
		display: inline-grid;
		border: 1px solid #333;
		vertical-align: middle;
	}

	.panel-head {
		display: flex;
		flex: none;
		align-items: center;
		height: 23px;
		padding: 0 2px 0 9px;
		border: 1px solid #aaa;
		border-bottom-color: #999;
		background: linear-gradient(#e6e6e6, #b9b9b9);
	}

	.panel-head h2 {
		flex: 1;
		padding-left: 7px;
		font-size: 16px;
		line-height: 20px;
	}

	.close {
		display: grid;
		place-items: center;
		width: 16px;
		height: 16px;
		border: 1px solid #888;
		background: #eee;
	}

	.soften {
		flex: none;
		height: 149px;
		padding: 7px 9px 0;
	}

	.soften label {
		display: flex;
		gap: 7px;
		align-items: center;
		height: 20px;
	}

	.soften output {
		display: block;
		height: 33px;
		padding-left: 126px;
		font-family: "Noto Sans", "Noto Sans CJK KR", sans-serif;
		font-size: 13px;
		line-height: 34px;
	}

	.soften small {
		padding-left: 2px;
		font-size: 12px;
	}

	.soften input[type="range"] {
		display: block;
		width: 237px;
		height: 28px;
		margin-left: 7px;
		appearance: none;
		background: none;
	}

	.soften input[type="range"]::-webkit-slider-runnable-track {
		height: 4px;
		border-top: 2px solid #999;
		border-bottom: 1px solid #fff;
	}

	.soften input[type="range"]::-webkit-slider-thumb {
		width: 9px;
		height: 18px;
		margin-top: -8px;
		appearance: none;
		background: linear-gradient(90deg, #aaa 1px, #f4f4f4 1px, #f4f4f4 7px, #777 7px);
		clip-path: polygon(0 0, 100% 0, 100% 75%, 50% 100%, 0 75%);
	}

	.ticks {
		display: flex;
		justify-content: space-between;
		width: 230px;
		height: 7px;
		margin-left: 11px;
	}

	.ticks i {
		width: 1px;
		height: 3px;
		background: #111;
	}

	.bar {
		display: flex;
		flex: none;
		gap: 10px;
		align-items: center;
		height: 33px;
		padding: 0 5px 2px 7px;
	}

	.bar.scenes {
		gap: 9px;
		height: 32px;
		padding-bottom: 0;
	}

	.push {
		flex: 1;
	}

	.mini {
		width: 18px;
		height: 18px;
	}

	.mini.wide {
		width: 26px;
	}

	.mini svg {
		width: 100%;
		height: 18px;
	}

	.muted {
		color: #8a8a8a;
	}

	.layers {
		flex: none;
		height: 218px;
		background: #fff;
	}

	table {
		width: 100%;
		border-collapse: separate;
		border-spacing: 0;
		table-layout: fixed;
	}

	th {
		height: 20px;
		padding: 0 5px;
		border: 1px solid #fff;
		border-right: 2px solid #777;
		border-bottom: 2px solid #777;
		background: #f0f0f0;
		font-weight: 400;
		line-height: 16px;
		text-align: left;
	}

	.show {
		width: 50px;
	}

	.color {
		width: 40px;
	}

	td {
		height: 26px;
		padding: 0 6px;
		font-family: "DejaVu Sans Condensed", "Noto Sans", sans-serif;
		font-size: 12px;
	}

	td label {
		display: flex;
		gap: 5px;
		align-items: center;
	}

	td.mid {
		padding: 0;
		text-align: center;
	}

	input[type="radio"] {
		width: 14px;
		height: 14px;
		appearance: none;
		border: 1px solid #444;
		border-radius: 50%;
		background: radial-gradient(circle, #000 4px, #fff 5px);
	}

	.swatch {
		display: inline-block;
		width: 20px;
		height: 20px;
		border: 1px solid #e8888a;
		background: #ff5656;
		vertical-align: middle;
	}

	.splitter {
		flex: none;
		height: 7px;
		margin: 2px 0 1px;
		border: 1px solid #aaa;
	}

	.list {
		flex: 1;
		border-top: 1px solid #aaa;
		background: #fff;
	}

	.scroll {
		display: flex;
		flex: none;
		flex-direction: column;
		align-items: center;
		width: 20px;
		padding: 8px 0 5px;
	}

	.scroll i {
		width: 19px;
		height: 21px;
		margin: auto 0 66px;
		background: #cdcdcd;
	}

	footer {
		display: flex;
		flex: none;
		align-items: center;
		height: 27px;
		padding: 6px 5px 0;
		border-top: 1px solid #fff;
		background: #f0f0f0;
		font-size: 17px;
		line-height: 20px;
		white-space: nowrap;
	}

	footer svg {
		flex: none;
		width: 20px;
		height: 20px;
		margin-right: 15px;
	}

	footer p {
		flex: 1;
		margin-left: -3px;
		padding-left: 11px;
		border-left: 1px solid #999;
	}

	footer label {
		padding: 0 9px 0 10px;
		border-left: 1px solid #999;
	}

	footer input {
		width: 250px;
		height: 20px;
		border: 1px solid #aab8c8;
		border-bottom: 0;
		background: #f0f0f0;
	}
</style>
